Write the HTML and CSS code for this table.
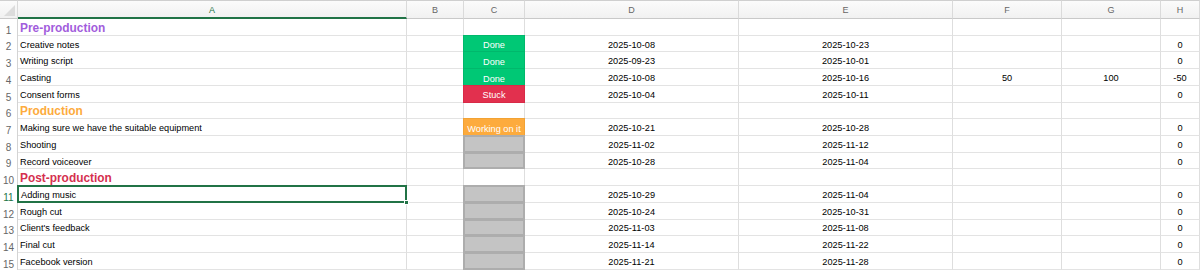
FILE: index.html
```html
<!DOCTYPE html>
<html>
<head>
<meta charset="utf-8">
<link rel="stylesheet" href="styles.css">
</head>
<body>
<div class="sheet">
  <div class="row head">
    <div class="corner"><span class="tri"></span></div>
    <div class="ch sel-col">A</div>
    <div class="ch">B</div>
    <div class="ch">C</div>
    <div class="ch">D</div>
    <div class="ch">E</div>
    <div class="ch">F</div>
    <div class="ch">G</div>
    <div class="ch">H</div>
  </div>

  <div class="row">
    <div class="rh">1</div>
    <div class="c a"><span class="group purple">Pre-production</span></div>
    <div class="c"></div><div class="c"></div><div class="c"></div><div class="c"></div><div class="c"></div><div class="c"></div><div class="c"></div>
  </div>
  <div class="row">
    <div class="rh">2</div>
    <div class="c a">Creative notes</div>
    <div class="c"></div>
    <div class="c st done">Done</div>
    <div class="c n">2025-10-08</div>
    <div class="c n">2025-10-23</div>
    <div class="c n"></div><div class="c n"></div>
    <div class="c n">0</div>
  </div>
  <div class="row">
    <div class="rh">3</div>
    <div class="c a">Writing script</div>
    <div class="c"></div>
    <div class="c st done">Done</div>
    <div class="c n">2025-09-23</div>
    <div class="c n">2025-10-01</div>
    <div class="c n"></div><div class="c n"></div>
    <div class="c n">0</div>
  </div>
  <div class="row">
    <div class="rh">4</div>
    <div class="c a">Casting</div>
    <div class="c"></div>
    <div class="c st done">Done</div>
    <div class="c n">2025-10-08</div>
    <div class="c n">2025-10-16</div>
    <div class="c n">50</div><div class="c n">100</div>
    <div class="c n">-50</div>
  </div>
  <div class="row">
    <div class="rh">5</div>
    <div class="c a">Consent forms</div>
    <div class="c"></div>
    <div class="c st stuck">Stuck</div>
    <div class="c n">2025-10-04</div>
    <div class="c n">2025-10-11</div>
    <div class="c n"></div><div class="c n"></div>
    <div class="c n">0</div>
  </div>
  <div class="row">
    <div class="rh">6</div>
    <div class="c a"><span class="group orange">Production</span></div>
    <div class="c"></div><div class="c"></div><div class="c"></div><div class="c"></div><div class="c"></div><div class="c"></div><div class="c"></div>
  </div>
  <div class="row">
    <div class="rh">7</div>
    <div class="c a">Making sure we have the suitable equipment</div>
    <div class="c"></div>
    <div class="c st working">Working on it</div>
    <div class="c n">2025-10-21</div>
    <div class="c n">2025-10-28</div>
    <div class="c n"></div><div class="c n"></div>
    <div class="c n">0</div>
  </div>
  <div class="row">
    <div class="rh">8</div>
    <div class="c a">Shooting</div>
    <div class="c"></div>
    <div class="c st empty"></div>
    <div class="c n">2025-11-02</div>
    <div class="c n">2025-11-12</div>
    <div class="c n"></div><div class="c n"></div>
    <div class="c n">0</div>
  </div>
  <div class="row">
    <div class="rh">9</div>
    <div class="c a">Record voiceover</div>
    <div class="c"></div>
    <div class="c st empty"></div>
    <div class="c n">2025-10-28</div>
    <div class="c n">2025-11-04</div>
    <div class="c n"></div><div class="c n"></div>
    <div class="c n">0</div>
  </div>
  <div class="row">
    <div class="rh">10</div>
    <div class="c a"><span class="group red">Post-production</span></div>
    <div class="c"></div><div class="c"></div><div class="c"></div><div class="c"></div><div class="c"></div><div class="c"></div><div class="c"></div>
  </div>
  <div class="row">
    <div class="rh sel-row">11</div>
    <div class="c a selected">Adding music<span class="handle"></span></div>
    <div class="c"></div>
    <div class="c st empty"></div>
    <div class="c n">2025-10-29</div>
    <div class="c n">2025-11-04</div>
    <div class="c n"></div><div class="c n"></div>
    <div class="c n">0</div>
  </div>
  <div class="row">
    <div class="rh">12</div>
    <div class="c a">Rough cut</div>
    <div class="c"></div>
    <div class="c st empty"></div>
    <div class="c n">2025-10-24</div>
    <div class="c n">2025-10-31</div>
    <div class="c n"></div><div class="c n"></div>
    <div class="c n">0</div>
  </div>
  <div class="row">
    <div class="rh">13</div>
    <div class="c a">Client's feedback</div>
    <div class="c"></div>
    <div class="c st empty"></div>
    <div class="c n">2025-11-03</div>
    <div class="c n">2025-11-08</div>
    <div class="c n"></div><div class="c n"></div>
    <div class="c n">0</div>
  </div>
  <div class="row">
    <div class="rh">14</div>
    <div class="c a">Final cut</div>
    <div class="c"></div>
    <div class="c st empty"></div>
    <div class="c n">2025-11-14</div>
    <div class="c n">2025-11-22</div>
    <div class="c n"></div><div class="c n"></div>
    <div class="c n">0</div>
  </div>
  <div class="row">
    <div class="rh">15</div>
    <div class="c a">Facebook version</div>
    <div class="c"></div>
    <div class="c st empty"></div>
    <div class="c n">2025-11-21</div>
    <div class="c n">2025-11-28</div>
    <div class="c n"></div><div class="c n"></div>
    <div class="c n">0</div>
  </div>
</div>
</body>
</html>
```

FILE: styles.css
```css
* { box-sizing: border-box; }
html, body {
  margin: 0;
  padding: 0;
  background: #ffffff;
}
body {
  width: 1200px;
  height: 270px;
  overflow: hidden;
  font-family: "Liberation Sans", Arial, sans-serif;
  color: #000;
}
.sheet {
  display: grid;
  grid-template-columns: 18px 389px 57px 61px 214px 214px 109px 99px 39px;
  grid-template-rows: 19px repeat(15, 16.733px);
}
.row { display: contents; }

.head > div {
  background: linear-gradient(#fbfbfb, #f1f1f1);
  border-top: 1px solid #cfcfcf;
  border-bottom: 1px solid #c9c9c9;
  border-right: 1px solid #dadada;
}
.corner {
  position: relative;
}
.tri {
  position: absolute;
  right: 2px;
  bottom: 2px;
  width: 0;
  height: 0;
  border-left: 11px solid transparent;
  border-bottom: 11px solid #dcdcdc;
}
.ch {
  display: flex;
  align-items: center;
  justify-content: center;
  font-size: 9px;
  color: #666;
  padding-top: 1px;
}
.head > .sel-col {
  color: #217346;
  border-bottom: 2px solid #217346;
}

.rh {
  display: flex;
  align-items: flex-end;
  justify-content: center;
  font-size: 10px;
  color: #666;
  background: #fff;
  border-right: 1px solid #d4d4d4;
  padding-bottom: 0;
}
.rh.sel-row {
  color: #217346;
}

.c {
  border-right: 1px solid #dedede;
  border-bottom: 1px solid #e3e3e3;
  font-size: 9.2px;
  display: flex;
  align-items: center;
  white-space: nowrap;
  overflow: hidden;
  padding-top: 2px;
}
.c.a {
  padding-left: 2px;
}
.c.n {
  justify-content: center;
}
.group {
  font-weight: bold;
  font-size: 11.9px;
}
.purple { color: #a25ddc; }
.orange { color: #fdab3d; }
.red { color: #d5304f; }

.st {
  justify-content: center;
  color: #fff;
  margin: -1px 0 0 -1px;
  padding-top: 3px;
}
.st.done {
  background: #00c875;
  border: 1px solid #00b86c;
}
.st.stuck {
  background: #e2304e;
  border: 1px solid #d82a47;
}
.st.working {
  background: #fdab3d;
  border: 1px solid #f2a234;
}
.st.empty {
  background: #c4c4c4;
  border: 2px solid #adadad;
}

.selected {
  position: relative;
  overflow: visible;
  border: 2px solid #217346;
  margin: -1px 0 0 -1px;
  padding-left: 3px;
}
.handle {
  position: absolute;
  right: -4px;
  bottom: -4px;
  width: 5px;
  height: 5px;
  background: #217346;
  border: 1px solid #fff;
}
```
